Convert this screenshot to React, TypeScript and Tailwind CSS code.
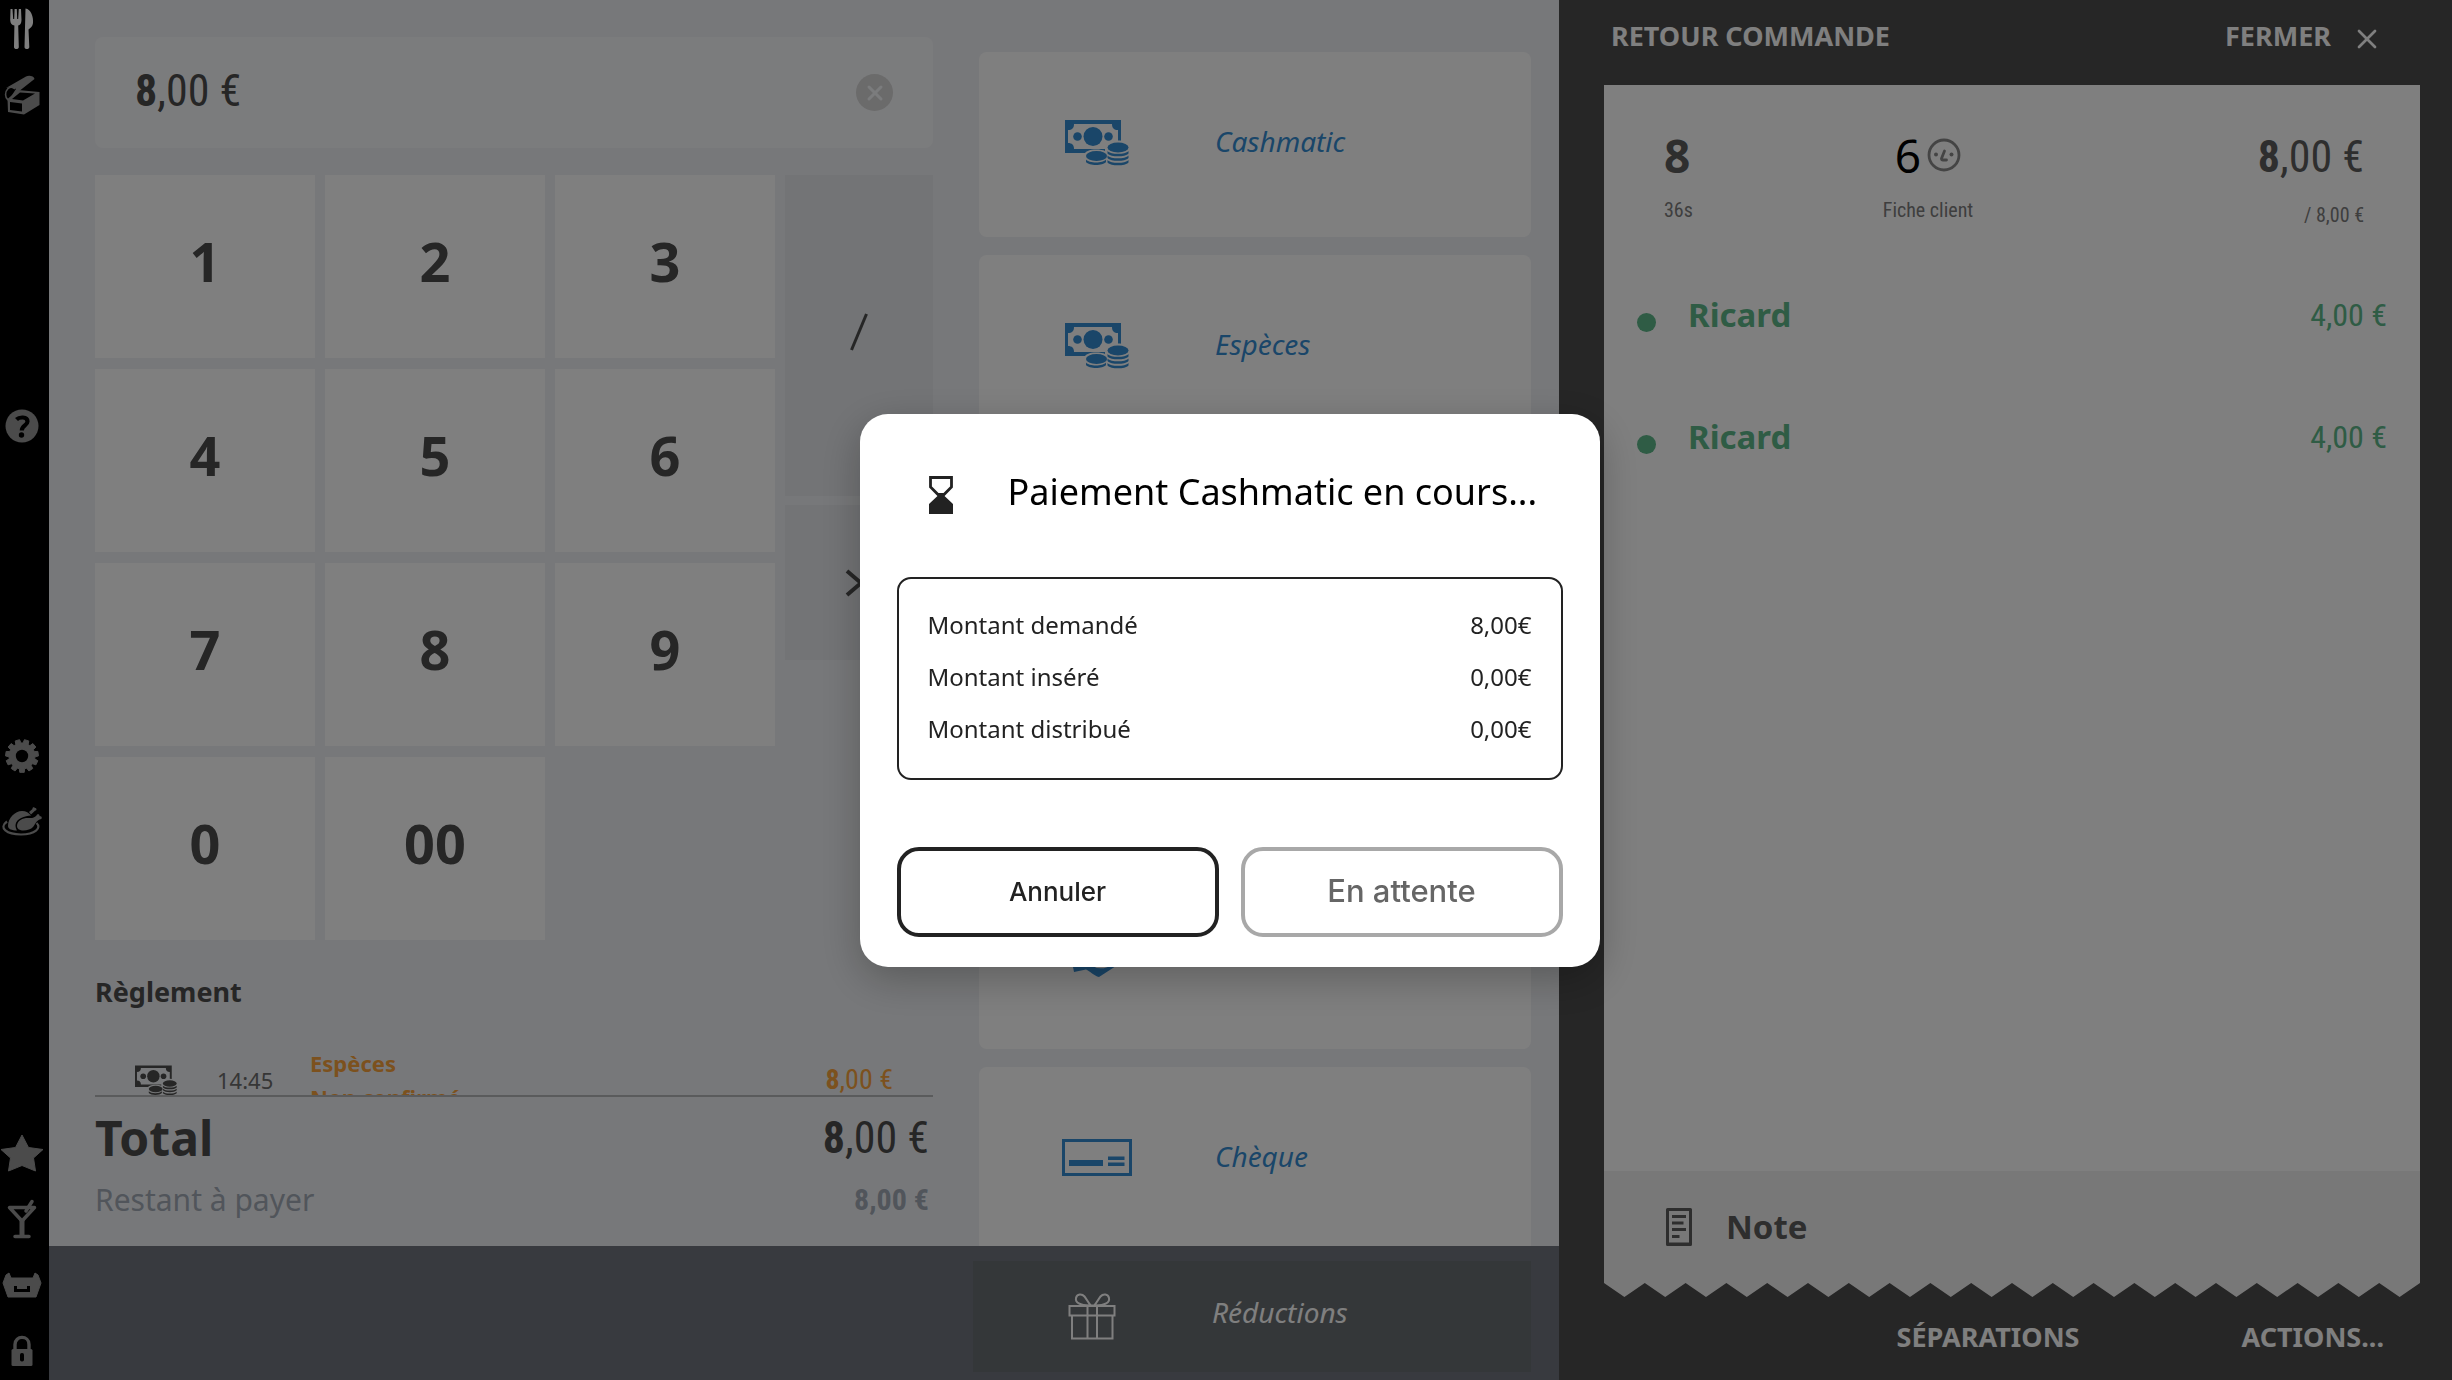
import React from "react";
import type { ReactNode } from "react";
import { X } from "lucide-react";

const CONDENSED = "font-['Roboto_Condensed','Roboto',sans-serif]";

/* ---------- icons ---------- */

function CashIcon({ gap, className }: { gap: string; className: string }) {
  return (
    <svg viewBox="0 0 64 46" className={className} fill="currentColor" aria-hidden="true">
      <path d="M0 0H56V33H0Z" />
      <path
        fill={gap}
        d="M9 4H47C47 8 49 10 53 10V23C49 23 47 25 47 29H9C9 25 7 23 3 23V10C7 10 9 8 9 4Z"
      />
      <circle cx="28" cy="16.5" r="9.5" />
      <circle cx="12.5" cy="16.5" r="4.3" />
      <circle cx="43.5" cy="16.5" r="4.3" />
      <path fill={gap} d="M19 36C19 31 25 29.500 31 29.500C35 29.500 38 30 40 31V28C40 23 46 20.500 53 20.500C60 20.500 65 23 65 28V47H19Z" />
      <ellipse cx="31.500" cy="36" rx="10.500" ry="5" />
      <path d="M21 39.500C24 43.500 38 43.500 41 39.500V42C38 46 24 46 21 42Z" />
      <ellipse cx="53" cy="27.500" rx="10.500" ry="5" />
      <path d="M42.500 31C46 34.800 60 34.800 63.500 31V33.500C60 37.300 46 37.300 42.500 33.500Z" />
      <path d="M42.500 35.500C46 39.300 60 39.300 63.500 35.500V38C60 41.800 46 41.800 42.500 38Z" />
      <path d="M42.500 40C46 43.800 60 43.800 63.500 40V42.500C60 46.300 46 46.300 42.500 42.500Z" />
    </svg>
  );
}

function ChequeIcon() {
  return (
    <svg viewBox="0 0 70 37" className="h-[37px] w-[70px]" aria-hidden="true">
      <rect x="1.500" y="1.500" width="67" height="34" fill="none" stroke="currentColor" strokeWidth="3" />
      <path fill="currentColor" d="M7 21H41V27H7ZM46 17.500H62.500V21H46ZM46 23.500H62.500V27H46Z" />
    </svg>
  );
}

function HandIcon() {
  return (
    <svg viewBox="0 0 70 46" className="h-[46px] w-[70px]" aria-hidden="true">
      <path
        fill="currentColor"
        d="M6 22L20 8L36 4L56 12L64 22L54 34L37 45C32 44 28 39 24 37.500L12 40L10 30Z"
      />
      <path d="M30 33C36 37 44 36 52 31" fill="none" stroke="#fff" strokeWidth="1.500" />
    </svg>
  );
}

function GiftIcon() {
  return (
    <svg viewBox="0 0 48 48" className="h-12 w-12" fill="none" stroke="currentColor" strokeWidth="2" aria-hidden="true">
      <path d="M1.500 14H46.500V23.500H1.500ZM4 23.500H44.500V46.500H4ZM19.500 14V46.500M29 14V46.500" />
      <path d="M21.500 13.500C12 13.500 7 10.500 8 6C9 1.500 14 1.500 16.500 4.500C19 7.500 20 11 23 13.500H26C29 11 30 7.500 32.500 4.500C35 1.500 40 1.500 41 6C42 10.500 37 13.500 27.500 13.500" />
    </svg>
  );
}

function CutleryIcon() {
  return (
    <svg viewBox="0 0 24 42" className="h-[42px] w-6" fill="currentColor" aria-hidden="true">
      <path d="M0.500 1H2.500L3.200 11H4.200L4.600 1H6.800L7.200 11H8.200L8.800 1H11L11.500 12C11.500 15.500 10 17 8.200 17.500L8.800 39C8.800 41.800 4 41.800 4 39L4.400 17.500C2 17 0.200 15.500 0.200 12Z" />
      <path d="M15.500 0.500C21 1 23.500 9 23 15C22.700 18.500 20.500 20 18.500 21.500L19.300 39C19.300 41.800 14.500 41.800 14.500 39Z" />
    </svg>
  );
}

function BoxIcon() {
  return (
    <svg viewBox="0 0 36 40" className="h-10 w-9" aria-hidden="true">
      <path d="M4 25C1 23 0.500 17 4 13.500C6 12 9 12 11 14" fill="none" stroke="currentColor" strokeWidth="1.600" />
      <path fill="currentColor" d="M2 13L22 1.500C25 0 30 1 30.500 4L14 17C11 19 9 22 5 25C8 20 10 17 12 14C9 12 5 12 2 13Z" />
      <path
        fill="currentColor"
        fillRule="evenodd"
        d="M3.500 24L14 15L35.500 17V30L20 39.500L4 37ZM8 24L19 25.500L31 18.500L16 17.500ZM6 27V35L18 36.500V28.500Z"
      />
    </svg>
  );
}

function HelpIcon() {
  return (
    <svg viewBox="0 0 34 34" className="h-[34px] w-[34px]" aria-hidden="true">
      <circle cx="17" cy="17" r="16.500" fill="currentColor" />
      <path d="M11.500 10.500C14 8 22.500 7 22.500 12.500C22.500 16.500 16.800 16.500 16.800 21.500" fill="none" stroke="#000" strokeWidth="4.200" />
      <circle cx="16.500" cy="26" r="2.700" />
    </svg>
  );
}

function gearPath(teeth: number) {
  const points: string[] = [];
  const step = (Math.PI * 2) / teeth;
  for (let i = 0; i < teeth; i += 1) {
    const a = i * step + Math.PI / 2;
    const corners: [number, number][] = [
      [-0.36, 13],
      [-0.24, 16.5],
      [0.24, 16.5],
      [0.36, 13],
    ];
    corners.forEach(([k, r]) => {
      points.push(`${(17 + r * Math.cos(a + k * step)).toFixed(2)} ${(17 + r * Math.sin(a + k * step)).toFixed(2)}`);
    });
  }
  return `M${points.join("L")}Z`;
}

function GearIcon() {
  return (
    <svg viewBox="0 0 34 34" className="h-[34px] w-[34px]" aria-hidden="true">
      <path d={gearPath(11)} fill="currentColor" stroke="currentColor" strokeLinejoin="round" />
      <circle cx="17" cy="17" r="6.200" />
    </svg>
  );
}

function ChickenIcon() {
  return (
    <svg viewBox="0 0 42 32" className="h-8 w-[42px]" aria-hidden="true">
      <path d="M6 15.500C-3 22 6 28.500 20 28.500C34 28.500 41 22 35.500 17" fill="none" stroke="currentColor" strokeWidth="2.200" />
      <path fill="currentColor" d="M7 20C7 12 14 5 21 5C25 5 28 7 30 9.500C24 10 15 12.500 14.500 19C14.500 21 15 23 16 24.500C11 24.500 7 23 7 20Z" />
      <path fill="currentColor" d="M16 20C16 14 23 11.500 28 12C31 12.300 33 12 35.500 9.500C36 7.500 39 8 38.500 10C41.500 10 41.500 13.500 38.500 13.500C35 15 34.500 18 32 21C28.500 25 16 26.500 16 20Z" />
      <path fill="currentColor" d="M28 6L31.500 3C31 1 33.500 0.500 34 2C36 2 36 4.500 34 4.800L30 8.500Z" />
    </svg>
  );
}

function StarIcon() {
  return (
    <svg viewBox="0 0 44 38" className="h-[38px] w-11 shrink-0" aria-hidden="true">
      <path
        fill="currentColor"
        stroke="currentColor"
        strokeLinejoin="round"
        d="M22 1L28.500 13.500L43 15.500L33.500 24L35.500 37L22 31.500L8.500 37L10.500 24L1 15.500L15.500 13.500Z"
      />
    </svg>
  );
}

function CocktailIcon() {
  return (
    <svg viewBox="0 0 30 40" className="h-10 w-[30px]" fill="none" stroke="currentColor" aria-hidden="true">
      <path d="M2.500 8.500H27.500L15 22Z" strokeWidth="3.500" strokeLinejoin="round" />
      <path d="M15 21V37" strokeWidth="5" />
      <path d="M8 37.500H22M19 12L25 2.500" strokeWidth="3.500" strokeLinecap="round" />
    </svg>
  );
}

function TrayIcon() {
  return (
    <svg viewBox="0 0 40 26" className="h-[26px] w-10" aria-hidden="true">
      <path
        fill="currentColor"
        stroke="currentColor"
        strokeLinejoin="round"
        d="M7 1L9 6H31L33 1L36 3L39 11L34 25H6L1 11L4 3Z"
      />
      <path d="M13.500 14V18.500H26.500V14" fill="none" stroke="#000" strokeWidth="3" />
    </svg>
  );
}

function LockIcon() {
  return (
    <svg viewBox="0 0 22 32" className="h-8 w-[22px]" aria-hidden="true">
      <path d="M4 15V9.500C4 0 18 0 18 9.500V15" fill="none" stroke="currentColor" strokeWidth="3.400" />
      <rect x="0.500" y="14" width="21" height="17" rx="1.500" fill="currentColor" />
      <rect x="9" y="18" width="4" height="8.500" rx="1.800" />
    </svg>
  );
}

function FaceIcon() {
  return (
    <svg viewBox="0 0 34 34" className="h-[34px] w-[34px]" fill="none" stroke="currentColor" aria-hidden="true">
      <circle cx="17" cy="17" r="15" strokeWidth="2.800" />
      <path d="M17.500 13L14.500 20.500Q14.500 22 16 22H19.500" strokeWidth="2.800" strokeLinecap="round" />
      <circle cx="9" cy="16.500" r="2" fill="currentColor" stroke="none" />
      <circle cx="24.500" cy="16.500" r="2" fill="currentColor" stroke="none" />
    </svg>
  );
}

function NoteIcon() {
  return (
    <svg viewBox="0 0 26 38" className="h-[38px] w-[26px]" aria-hidden="true">
      <path fill="currentColor" fillRule="evenodd" d="M1.500 0H24.500Q26 0 26 1.500V36.500Q26 38 24.500 38H1.500Q0 38 0 36.500V1.500Q0 0 1.500 0ZM3 3V34.500H23V3Z" />
      <path d="M6 8.500H20M6 15H17.500M6 21.500H20M6 28.500H13.500" stroke="currentColor" strokeWidth="3" />
    </svg>
  );
}

function HourglassIcon() {
  return (
    <svg viewBox="0 0 24 38" className="h-[38px] w-6" aria-hidden="true">
      <path d="M1.500 1.500H22.500V11L15 18.500H9L1.500 11Z" fill="#fff" stroke="#222" strokeWidth="2.800" />
      <path d="M9 17H15V19.500L24 28V38H0V28L9 19.500Z" fill="#222" />
    </svg>
  );
}

function ZigZag() {
  const teeth = 20;
  const d = Array.from({ length: teeth }, (_, i) => `L${i * 10 + 5} 14L${i * 10 + 10} 0`).join("");
  return (
    <svg viewBox="0 0 200 14" preserveAspectRatio="none" className="block h-3.5 w-full text-[#f1f1f1]" aria-hidden="true">
      <path d={`M0 0${d}Z`} fill="currentColor" />
    </svg>
  );
}

/* ---------- pieces ---------- */

function Price({ whole, cents, className }: { whole: string; cents: string; className: string }) {
  return (
    <span className={`${CONDENSED} whitespace-nowrap ${className}`}>
      <b>{whole}</b>,{cents} €
    </span>
  );
}

function RailButton({ label, active, children }: { label: string; active?: boolean; children: ReactNode }) {
  return (
    <button
      type="button"
      aria-label={label}
      className={`flex h-[58px] w-[43px] items-center justify-center ${active ? "text-white" : "text-[#969696]"}`}
    >
      {children}
    </button>
  );
}

function SideRail() {
  return (
    <nav className="flex flex-col justify-between bg-black">
      <div className="flex flex-col gap-2">
        <RailButton label="Restaurant" active><CutleryIcon /></RailButton>
        <RailButton label="Livraison"><BoxIcon /></RailButton>
      </div>
      <RailButton label="Aide"><HelpIcon /></RailButton>
      <div className="flex flex-col gap-2">
        <RailButton label="Réglages"><GearIcon /></RailButton>
        <RailButton label="Cuisine"><ChickenIcon /></RailButton>
      </div>
      <div className="flex flex-col gap-2">
        <RailButton label="Favoris"><StarIcon /></RailButton>
        <RailButton label="Bar"><CocktailIcon /></RailButton>
        <RailButton label="Tiroir"><TrayIcon /></RailButton>
        <RailButton label="Verrouiller"><LockIcon /></RailButton>
      </div>
    </nav>
  );
}

function Key({ children }: { children: ReactNode }) {
  return (
    <button type="button" className="flex h-[183px] items-center justify-center bg-white pb-2.5 text-[54px] font-bold">
      {children}
    </button>
  );
}

function Keypad() {
  return (
    <div className="grid grid-cols-[220fr_220fr_220fr_148fr] gap-x-2.5 gap-y-[11px]">
      <Key>1</Key>
      <Key>2</Key>
      <Key>3</Key>
      <div className="row-span-4 flex flex-col gap-[9px]">
        <button type="button" aria-label="Diviser" className="flex h-[321px] items-center justify-center bg-[#e6e8ec] pb-2">
          <svg viewBox="0 0 18 38" className="h-[38px] w-[18px]" aria-hidden="true">
            <path d="M1.500 37L16.500 1" stroke="currentColor" strokeWidth="3" />
          </svg>
        </button>
        <button type="button" aria-label="Suivant" className="flex h-[155px] items-center justify-center bg-[#e6e8ec] pr-2">
          <svg viewBox="0 0 20 28" className="h-7 w-5" aria-hidden="true">
            <path d="M2 2L16 14L2 26" fill="none" stroke="currentColor" strokeWidth="4" />
          </svg>
        </button>
      </div>
      <Key>4</Key>
      <Key>5</Key>
      <Key>6</Key>
      <Key>7</Key>
      <Key>8</Key>
      <Key>9</Key>
      <Key>0</Key>
      <Key>00</Key>
    </div>
  );
}

function PaymentCard({ icon, label }: { icon?: ReactNode; label?: string }) {
  return (
    <button
      type="button"
      className="flex h-[185px] shrink-0 items-center gap-[83px] rounded-lg bg-white pb-1 pl-[83px] text-[28px] text-[#348cd2] italic"
    >
      <span className="flex w-[70px] justify-center">{icon}</span>
      {label && <span className="pb-1">{label}</span>}
    </button>
  );
}

function Checkout() {
  return (
    <main className="flex min-h-0 flex-col bg-[#eff1f4]">
      <div className="grid min-h-0 flex-1 grid-cols-[838fr_552fr] grid-rows-[minmax(0,1fr)] gap-[46px] overflow-hidden pr-7 pl-[46px]">
        <section className="flex min-h-0 flex-col pt-[37px]">
          <div className="mb-[27px] flex h-[111px] items-center justify-between rounded-lg bg-[#f7f8fb] pr-10 pl-10">
            <Price whole="8" cents="00" className="pb-1 text-[44px]" />
            <button
              type="button"
              aria-label="Effacer"
              className="flex h-[37px] w-[37px] items-center justify-center rounded-full bg-[#d6d6d6] text-[#f7f8fb]"
            >
              <X size={24} strokeWidth={3} />
            </button>
          </div>

          <Keypad />

          <div className="min-h-0 flex-1 overflow-hidden border-b-2 border-[#b4b6b8] pt-[34px]">
            <h2 className="text-[27px] leading-9 font-bold">Règlement</h2>
            <div className="mt-9 flex items-center pr-10 text-[#f9a33c]">
              <span className="ml-10 w-[82px] text-[#4c4c4c]">
                <CashIcon gap="#eff1f4" className="h-[31px] w-[42px]" />
              </span>
              <span className="w-[93px] text-[22px] text-[#6c6c6c]">14:45</span>
              <span className="flex-1 text-[22px] leading-[34px] font-bold">
                Espèces
                <br />
                Non confirmé
              </span>
              <Price whole="8" cents="00" className="text-[28px]" />
            </div>
          </div>

          <div className="h-[149px] pt-[11px] pr-1">
            <div className="flex h-[60px] items-center justify-between">
              <span className="text-[48px] leading-[60px] font-bold">Total</span>
              <Price whole="8" cents="00" className="text-[44px] leading-[60px]" />
            </div>
            <div className="flex h-[62px] items-center justify-between text-[#a2aab6]">
              <span className="text-[30px]">Restant à payer</span>
              <span className={`${CONDENSED} text-[30px] font-bold`}>8,00 €</span>
            </div>
          </div>
        </section>

        <section className="flex min-h-0 flex-col gap-[18px] overflow-hidden pt-[52px]">
          <PaymentCard icon={<CashIcon gap="#fff" className="h-[46px] w-16" />} label="Cashmatic" />
          <PaymentCard icon={<CashIcon gap="#fff" className="h-[46px] w-16" />} label="Espèces" />
          <PaymentCard />
          <PaymentCard />
          <PaymentCard icon={<HandIcon />} />
          <PaymentCard icon={<ChequeIcon />} label="Chèque" />
        </section>
      </div>

      <footer className="grid h-[134px] grid-cols-[924fr_558fr] bg-[#70757e] pt-[15px] pr-7">
        <button
          type="button"
          className="col-start-2 flex h-[111px] items-center gap-[85px] bg-[#686e72] pb-0.5 pl-[84px] text-[28px] text-white italic"
        >
          <span className="flex w-[70px] justify-center"><GiftIcon /></span>
          <span className="pb-2">Réductions</span>
        </button>
      </footer>
    </main>
  );
}

function TicketLine({ name, whole, cents }: { name: string; whole: string; cents: string }) {
  return (
    <li className="flex h-[122px] items-start pr-[33px] pl-[33px] text-[#5eb88a]">
      <span className="mt-6 h-[19px] w-[19px] rounded-full bg-current" />
      <span className="ml-8 flex-1 text-[33px] leading-[52px] font-bold">{name}</span>
      <span className={`${CONDENSED} text-[32px] leading-[52px]`}>{whole},{cents} €</span>
    </li>
  );
}

function Ticket() {
  return (
    <aside className="flex min-h-0 flex-col bg-[#4c4c4c] pr-8 pl-[45px] text-white">
      <header className="flex h-[85px] items-center justify-between pr-[37px] pb-3 pl-[7px] text-[27px] font-bold">
        <button type="button">RETOUR COMMANDE</button>
        <button type="button" className="flex items-center gap-5">
          FERMER
          <X size={32} strokeWidth={2} className="mt-1" />
        </button>
      </header>

      <div className="flex min-h-0 flex-1 flex-col bg-white text-[#5c5c5c]">
        <div className="grid h-[185px] grid-cols-[188fr_152fr_360fr] items-start pt-10 pr-14 pl-[60px]">
          <div>
            <div className="text-[46px] leading-[60px] font-bold">8</div>
            <div className={`${CONDENSED} text-xl leading-[50px] text-[#7c7c7c]`}>36s</div>
          </div>
          <div className="text-center">
            <div className="flex items-center justify-center gap-1.5 text-[46px] leading-[60px] text-[#888]">
              <span className="text-black">6</span>
              <FaceIcon />
            </div>
            <div className={`${CONDENSED} text-xl leading-[50px] text-[#7c7c7c]`}>Fiche client</div>
          </div>
          <div className="text-right">
            <Price whole="8" cents="00" className="block text-[44px] leading-[64px]" />
            <div className={`${CONDENSED} text-xl leading-[52px] text-[#7c7c7c]`}>/ 8,00 €</div>
          </div>
        </div>

        <ul className="flex-1 pt-[19px]">
          <TicketLine name="Ricard" whole="4" cents="00" />
          <TicketLine name="Ricard" whole="4" cents="00" />
        </ul>

        <button type="button" className="flex h-28 items-center gap-[34px] bg-[#f1f1f1] pl-[62px] text-[33px] font-bold">
          <NoteIcon />
          Note
        </button>
      </div>
      <ZigZag />

      <footer className="flex h-[83px] items-center justify-end gap-[162px] pr-9 pb-0.5 text-[27px] font-bold">
        <button type="button">SÉPARATIONS</button>
        <button type="button">ACTIONS...</button>
      </footer>
    </aside>
  );
}

function AmountRow({ label, value }: { label: string; value: string }) {
  return (
    <div className="flex justify-between leading-[52px]">
      <dt>{label}</dt>
      <dd>{value}</dd>
    </div>
  );
}

function PaymentDialog() {
  return (
    <div className="fixed inset-0 flex items-center justify-center bg-black/50 pl-[7px]">
      <div
        role="dialog"
        aria-modal="true"
        aria-labelledby="dialog-title"
        className="w-[740px] rounded-[28px] bg-white px-[37px] pb-[30px] text-[#222] shadow-[0_12px_40px_rgba(0,0,0,0.25)]"
      >
        <div className="flex h-[163px] items-center gap-[55px] pl-8">
          <HourglassIcon />
          <h1 id="dialog-title" className="pb-1.5 text-[36px] text-black">
            Paiement Cashmatic en cours...
          </h1>
        </div>
        <dl className="h-[203px] rounded-[14px] border-2 border-[#222] px-[29px] pt-5 text-2xl">
          <AmountRow label="Montant demandé" value="8,00€" />
          <AmountRow label="Montant inséré" value="0,00€" />
          <AmountRow label="Montant distribué" value="0,00€" />
        </dl>
        <div className="mt-[67px] grid grid-cols-2 gap-[22px] font-['Inter','Noto_Sans',sans-serif] font-medium">
          <button type="button" className="h-[90px] rounded-[22px] border-4 border-[#222] text-[26px]">
            Annuler
          </button>
          <button type="button" disabled className="h-[90px] rounded-[22px] border-4 border-[#a8a8a8] text-[31px] text-[#666]">
            En attente
          </button>
        </div>
      </div>
    </div>
  );
}

export default function App() {
  return (
    <div className="grid h-screen grid-cols-[49px_minmax(0,1510fr)_minmax(0,893fr)] grid-rows-[minmax(0,1fr)] overflow-hidden bg-black font-['Noto_Sans',sans-serif] text-[#4c4c4c]">
      <SideRail />
      <Checkout />
      <Ticket />
      <PaymentDialog />
    </div>
  );
}
